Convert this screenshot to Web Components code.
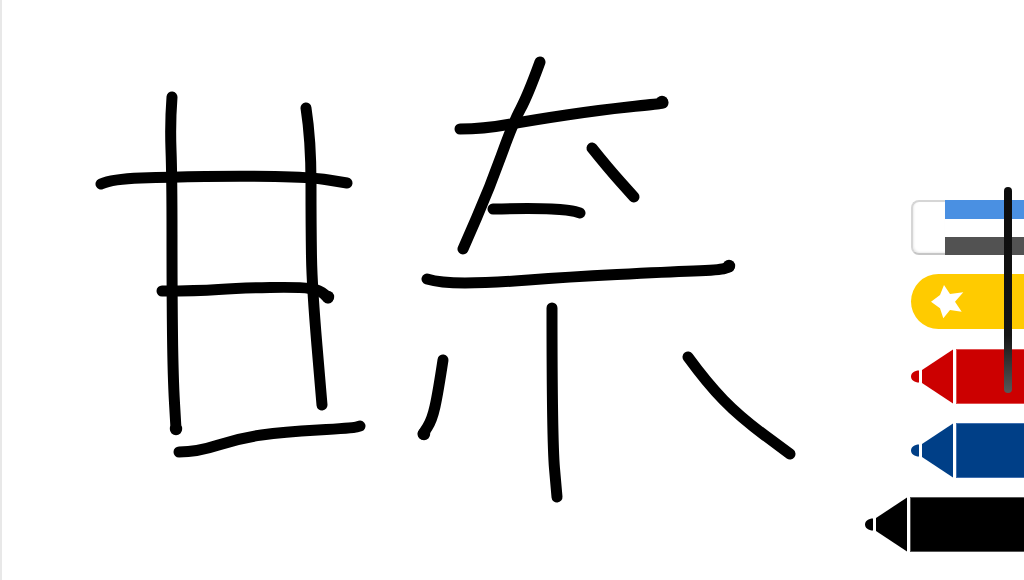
<!DOCTYPE html>
<html lang="ja">
<head>
<meta charset="utf-8">
<title>Sketch</title>
<style>
  html, body { margin: 0; background: #fff; }
</style>
</head>
<body>
<sketch-board>
  <ink-layer slot="ink"></ink-layer>
  <tool-eraser></tool-eraser>
  <tool-highlighter></tool-highlighter>
  <tool-marker color="#cc0000" edge="#e05050" reach="68"></tool-marker>
  <tool-marker color="#003f87" edge="#4070b0" reach="68"></tool-marker>
  <tool-marker color="#000000" edge="#555555" reach="114"></tool-marker>
</sketch-board>

<script>
// Page frame: the drawing surface with the tool tray stacked on top of it
class SketchBoard extends HTMLElement {
  constructor() {
    super();
    this.attachShadow({ mode: 'open' });
  }

  connectedCallback() {
    this.shadowRoot.innerHTML = `
      <style>
        :host {
          display: grid;
          width: 1024px;
          height: 580px;
          position: relative;
          overflow: hidden;
          background: #fff;
          box-shadow: inset 2px 0 0 #e8e8e8;
        }

        .ink, .tray {
          grid-area: 1 / 1;
        }

        .tray {
          display: flex;
          flex-direction: column;
          align-items: flex-end;
          justify-content: flex-end;
          gap: 19.2px;
          padding-bottom: 28px;
        }

        .handle {
          position: absolute;
          left: 1004px;
          top: 187px;
          width: 7.7px;
          height: 206px;
          border-radius: 4px;
          background: linear-gradient(180deg, #0c0c0c 0%, #141414 72%, #585858 100%);
        }
      </style>
      <div class="ink"><slot name="ink"></slot></div>
      <div class="tray"><slot></slot></div>
      <div class="handle"></div>
    `;
  }
}

// Handwritten strokes, points are in page pixels
const STROKES = [
  [[172,97],[170,123],[172,177],[172,293],[173,377],[176,429]],
  [[306,108],[311,140],[311,227],[312,287],[322,405]],
  [[101,184],[112,179],[170,177],[240,176],[310,177],[347,183]],
  [[162,291],[197,291],[240,288],[300,287],[320,290],[328,298]],
  [[179,452],[197,452],[240,438],[283,432],[353,428],[360,426]],
  [[540,62],[528,95],[513,123],[490,187],[463,249]],
  [[460,129],[483,129],[533,120],[600,110],[657,104],[663,103]],
  [[592,148],[608,168],[634,197]],
  [[493,209],[533,208],[570,210],[580,213]],
  [[427,279],[440,283],[490,283],[567,277],[667,272],[720,270],[729,267]],
  [[552,308],[552,440],[557,497]],
  [[443,360],[438,393],[432,420],[423,434]],
  [[688,357],[707,383],[740,417],[790,454]]
];

// Little blobs where the pen stopped and lifted
const PEN_LIFTS = [[662,102],[729,266],[176,429],[328,297],[424,434]];

class InkLayer extends HTMLElement {
  constructor() {
    super();
    this.attachShadow({ mode: 'open' });
  }

  connectedCallback() {
    const paths = STROKES.map(pts => `<path d="${this.smooth(pts)}"/>`).join('');
    const lifts = PEN_LIFTS.map(p => `<circle cx="${p[0]}" cy="${p[1]}" r="6.2"/>`).join('');
    this.shadowRoot.innerHTML = `
      <style>
        :host { display: block; width: 1024px; height: 580px; }
        svg { display: block; }
        path { fill: none; stroke: #000; stroke-width: 11; stroke-linecap: round; stroke-linejoin: round; }
        circle { fill: #000; }
      </style>
      <svg width="1024" height="580" viewBox="0 0 1024 580">${paths}${lifts}</svg>
    `;
  }

  // Quadratic curves through the midpoints so the strokes stay soft
  smooth(pts) {
    let d = `M${pts[0][0]} ${pts[0][1]}`;
    for (let i = 1; i < pts.length - 1; i++) {
      const mx = (pts[i][0] + pts[i + 1][0]) / 2;
      const my = (pts[i][1] + pts[i + 1][1]) / 2;
      d += ` Q${pts[i][0]} ${pts[i][1]} ${mx} ${my}`;
    }
    const last = pts[pts.length - 1];
    return d + ` L${last[0]} ${last[1]}`;
  }
}

class ToolEraser extends HTMLElement {
  constructor() {
    super();
    this.attachShadow({ mode: 'open' });
  }

  connectedCallback() {
    this.shadowRoot.innerHTML = `
      <style>
        :host { display: flex; width: 113px; height: 55px; }
        .tip {
          width: 34px;
          box-sizing: border-box;
          background: #fff;
          border: 2px solid #d6d6d6;
          border-bottom-color: #c6c6c6;
          border-right: 0;
          border-radius: 8px 0 0 8px;
          box-shadow: inset 1px -1px 2px #ececec;
        }
        .sleeve { flex: 1; display: flex; flex-direction: column; }
        .sleeve div { flex: 1; }
        .blue { background: #4a90e2; }
        .white { background: #fff; }
        .dark { background: #525252; }
      </style>
      <div class="tip"></div>
      <div class="sleeve">
        <div class="blue"></div>
        <div class="white"></div>
        <div class="dark"></div>
      </div>
    `;
  }
}

class ToolHighlighter extends HTMLElement {
  constructor() {
    super();
    this.attachShadow({ mode: 'open' });
  }

  connectedCallback() {
    this.shadowRoot.innerHTML = `
      <style>
        :host {
          display: flex;
          align-items: center;
          width: 113px;
          height: 55px;
          background: #ffcb00;
          border-radius: 27.5px 0 0 27.5px;
        }
        svg { display: block; }
      </style>
      <svg width="113" height="55" viewBox="0 0 113 55">
        <polygon fill="#fff" points="20,27.7 29,21 33,11 39,20 52.3,18.3 44,27.7 50.7,37.7 39,36 32.3,44.3 29,34.3"/>
      </svg>
    `;
  }
}

class ToolMarker extends HTMLElement {
  constructor() {
    super();
    this.attachShadow({ mode: 'open' });
  }

  connectedCallback() {
    const color = this.getAttribute('color');
    const edge = this.getAttribute('edge');
    const reach = this.getAttribute('reach');
    this.shadowRoot.innerHTML = `
      <style>
        :host { display: flex; height: 55px; }
        svg { display: block; flex: none; }
        .body {
          width: ${reach}px;
          box-sizing: border-box;
          background: ${color};
          border-top: 1px solid ${edge};
          border-bottom: 1px solid ${edge};
          border-left: 1px solid ${edge};
        }
      </style>
      <svg width="45" height="55" viewBox="0 0 45 55">
        <path fill="${color}" d="M8 21.5 C3.5 21.5 0 24 0 27.5 C0 31 3.5 33.5 8 33.5 Z"/>
        <path fill="${color}" d="M11 21 L42 0.5 V54.5 L11 34 Z"/>
      </svg>
      <div class="body"></div>
    `;
  }
}

customElements.define('sketch-board', SketchBoard);
customElements.define('ink-layer', InkLayer);
customElements.define('tool-eraser', ToolEraser);
customElements.define('tool-highlighter', ToolHighlighter);
customElements.define('tool-marker', ToolMarker);
</script>
</body>
</html>
